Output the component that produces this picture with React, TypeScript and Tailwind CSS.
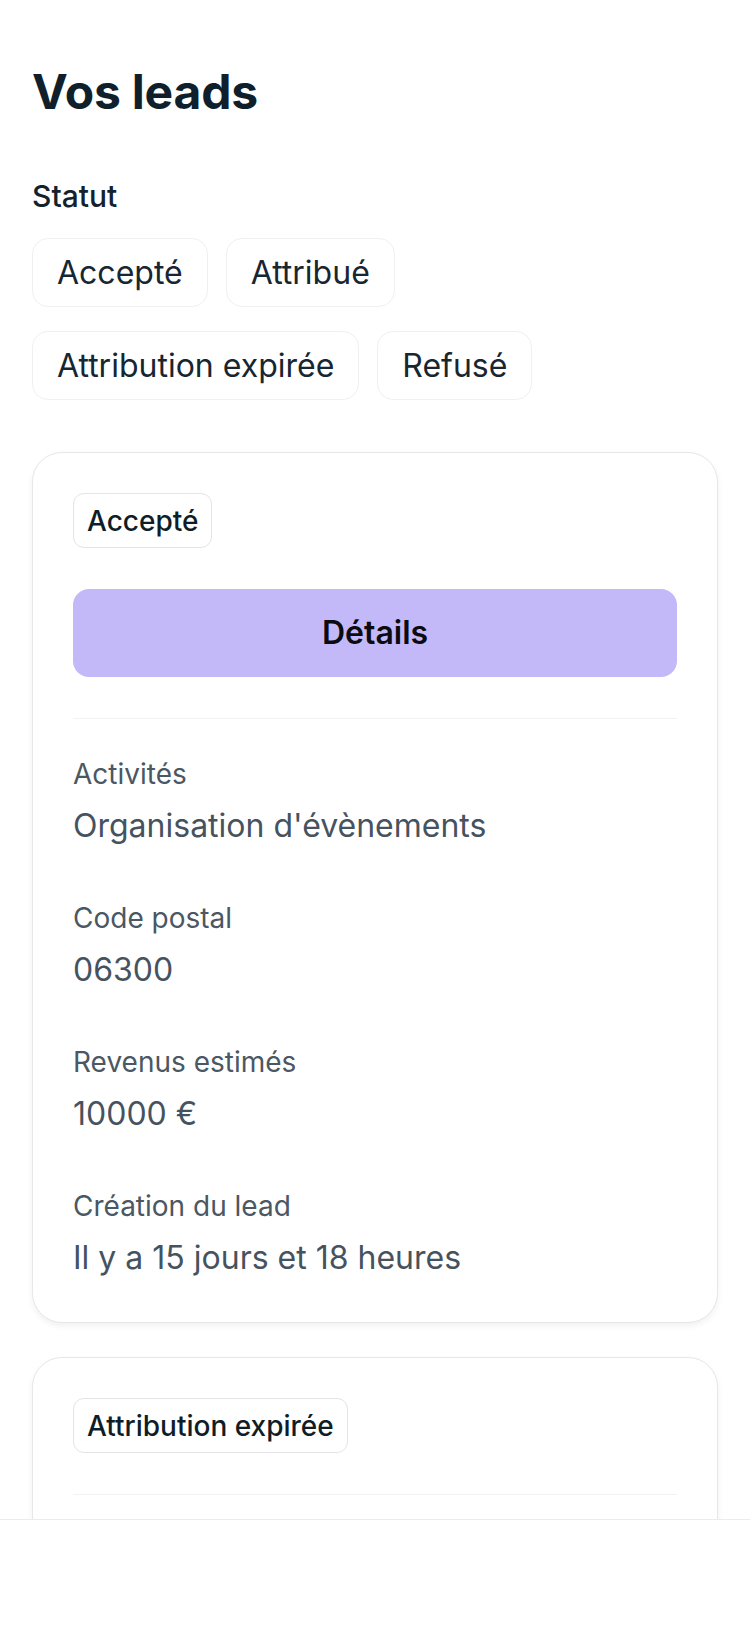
const statusFilters = ['Accepté', 'Attribué', 'Attribution expirée', 'Refusé'];

interface Lead {
  status: string;
  showDetails: boolean;
  fields: { label: string; value: string }[];
}

const leads: Lead[] = [
  {
    status: 'Accepté',
    showDetails: true,
    fields: [
      { label: 'Activités', value: "Organisation d'évènements" },
      { label: 'Code postal', value: '06300' },
      { label: 'Revenus estimés', value: '10000 €' },
      { label: 'Création du lead', value: 'Il y a 15 jours et 18 heures' },
    ],
  },
  {
    status: 'Attribution expirée',
    showDetails: false,
    fields: [],
  },
];

function LeadCard({ lead }: { lead: Lead }) {
  return (
    <div className="flex flex-col rounded-[30px] border border-[#e7e7e7] bg-white p-10 shadow-[0_3px_6px_rgba(0,0,0,0.06)]">
      <div className="flex">
        <span className="flex h-[55px] items-center rounded-[11px] border border-[#e4e4e4] px-[13px] text-[28px] font-medium text-[#0f1d27]">
          {lead.status}
        </span>
      </div>
      {lead.showDetails && (
        <button className="mt-[41px] h-[88px] w-full rounded-[16px] bg-[#c4b9f8] text-[32px] font-semibold text-[#0b0b10]">
          Détails
        </button>
      )}
      <div className="mt-[41px] h-px w-full bg-[#f2f2f3]" />
      {lead.fields.length > 0 ? (
        <div className="mt-[35px] flex flex-col gap-[48px]">
          {lead.fields.map((f) => (
            <div key={f.label} className="flex flex-col">
              <span className="text-[28px] leading-[40px] text-[#4b5763]">{f.label}</span>
              <span className="mt-[8px] text-[32px] leading-[48px] text-[#46535f]">{f.value}</span>
            </div>
          ))}
        </div>
      ) : (
        <div className="h-[120px]" />
      )}
    </div>
  );
}

export default function App() {
  return (
    <div className="min-h-screen bg-white font-['Inter',sans-serif]">
      <div className="flex flex-col px-8 pt-16 pb-[160px]">
        <h1 className="text-[48px] font-bold leading-[56px] tracking-[-0.2px] text-[#0f1f2b]">Vos leads</h1>

        <div className="mt-14 text-[30px] font-medium leading-[40px] text-[#13222d]">Statut</div>
        <div className="mt-[22px] flex flex-wrap gap-x-[18px] gap-y-[24px]">
          {statusFilters.map((s) => (
            <button
              key={s}
              className="flex h-[69px] items-center rounded-[16px] border border-[#f0f0f0] px-6 text-[32px] text-[#172631]"
            >
              {s}
            </button>
          ))}
        </div>

        <div className="mt-[52px] flex flex-col gap-[34px]">
          {leads.map((lead, i) => (
            <LeadCard key={i} lead={lead} />
          ))}
        </div>
      </div>

      <div className="fixed inset-x-0 bottom-0 h-[111px] border-t border-[#ececec] bg-white" />
    </div>
  );
}
